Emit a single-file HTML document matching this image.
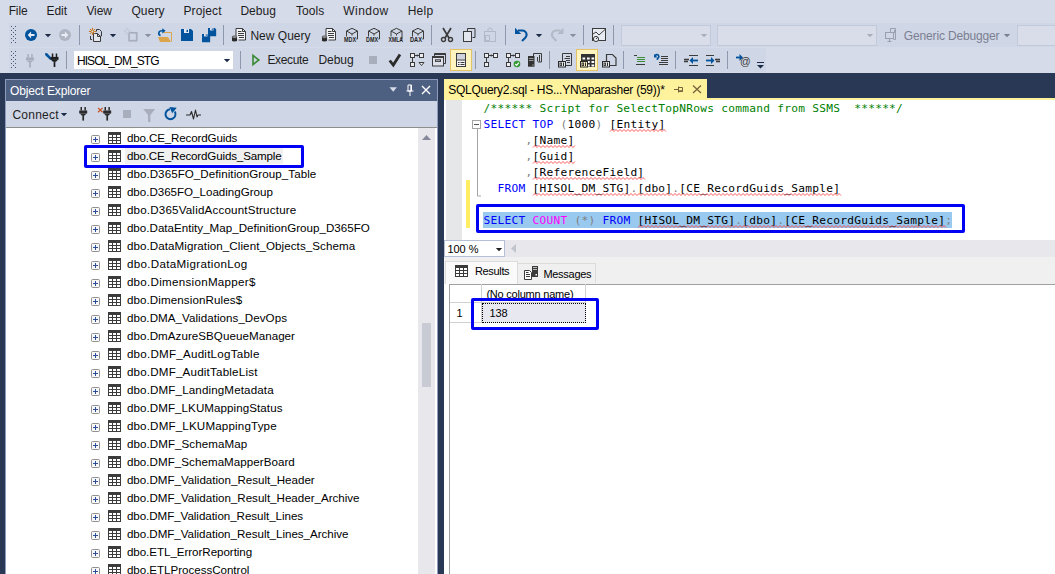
<!DOCTYPE html>
<html><head><meta charset="utf-8"><title>SSMS</title><style>
*{box-sizing:border-box;margin:0;padding:0}
html,body{width:1055px;height:574px;overflow:hidden;background:#293955}
body{position:relative;font-family:"Liberation Sans",sans-serif;font-size:11.6px;color:#1e1e1e}
.abs{position:absolute}
.t{position:absolute;white-space:pre;line-height:16px;height:16px}
#top{position:absolute;left:0;top:0;width:1055px;height:73px;background:#d6dbe9}
.tb{position:absolute;background:#cfd6e5}
.sep{position:absolute;width:1px;height:20px;background:#8e98ad}
svg{position:absolute;overflow:visible}
.hl{position:absolute;width:22px;height:22px;background:#fdf4bf;border:1px solid #e5c365}
.combo{position:absolute;height:21px;background:#d9ddea;border:1px solid #c2c9d9}
#oe{position:absolute;left:5px;top:79px;width:433px;height:500px;background:#fff;border:1px solid #8e9bbc}
#oeh{position:absolute;left:0;top:0;width:431px;height:21px;background:#4d6082;color:#fff}
#oet{position:absolute;left:0;top:21px;width:431px;height:26px;background:#cfd6e5}
.row{position:absolute;left:0;height:18px;width:412px}
.cl{position:absolute;left:483.5px;height:16px;line-height:16px;white-space:pre;font-family:"DejaVu Sans Mono","Liberation Mono",monospace;font-size:11.2px;letter-spacing:0.258px;color:#000}
.k{color:#0000ff}.g{color:#808080}.c{color:#008000}.m{color:#ff00ff}
.grid{font-family:"Liberation Sans",sans-serif;font-size:11px;color:#000}
</style></head><body>
<div id="top">
<div class="tb" style="left:9px;top:23px;width:1046px;height:24px"></div>
<div class="tb" style="left:9px;top:48px;width:757px;height:24px"></div>
<span class="t" style="left:8.70px;top:3px;font-size:12px;letter-spacing:-0.148px;line-height:16px;height:16px;">File</span>
<span class="t" style="left:46.40px;top:3px;font-size:12px;letter-spacing:0.004px;line-height:16px;height:16px;">Edit</span>
<span class="t" style="left:86.40px;top:3px;font-size:12px;letter-spacing:-0.066px;line-height:16px;height:16px;">View</span>
<span class="t" style="left:131.40px;top:3px;font-size:12px;letter-spacing:0.128px;line-height:16px;height:16px;">Query</span>
<span class="t" style="left:183.40px;top:3px;font-size:12px;letter-spacing:0.140px;line-height:16px;height:16px;">Project</span>
<span class="t" style="left:240.40px;top:3px;font-size:12px;letter-spacing:0.031px;line-height:16px;height:16px;">Debug</span>
<span class="t" style="left:296.00px;top:3px;font-size:12px;letter-spacing:0.071px;line-height:16px;height:16px;">Tools</span>
<span class="t" style="left:343.20px;top:3px;font-size:12px;letter-spacing:0.482px;line-height:16px;height:16px;">Window</span>
<span class="t" style="left:407.70px;top:3px;font-size:12px;letter-spacing:0.271px;line-height:16px;height:16px;">Help</span>
<svg style="left:11px;top:26px" width="5" height="18" viewBox="0 0 5 18"><g fill="#4a5574"><rect x="0" y="0" width="1" height="1"/><rect x="4" y="0" width="1" height="1"/><rect x="2" y="2" width="1" height="1"/><rect x="0" y="4" width="1" height="1"/><rect x="4" y="4" width="1" height="1"/><rect x="2" y="6" width="1" height="1"/><rect x="0" y="8" width="1" height="1"/><rect x="4" y="8" width="1" height="1"/><rect x="2" y="10" width="1" height="1"/><rect x="0" y="12" width="1" height="1"/><rect x="4" y="12" width="1" height="1"/><rect x="2" y="14" width="1" height="1"/><rect x="0" y="16" width="1" height="1"/><rect x="4" y="16" width="1" height="1"/></g></svg>
<svg style="left:25px;top:29px" width="12" height="12" viewBox="0 0 12 12"><circle cx="6" cy="6" r="6" fill="#00539c"/><path d="M2.700 6L6.100 2.600v2.300H9.500v2.200H6.100v2.300z" fill="#e8ecf5"/></svg>
<svg style="left:44px;top:34px" width="8" height="4" viewBox="0 0 8 4"><g transform="translate(0.5,0)"><path d="M0.300 0h6.400L3.500 3.300z" fill="#1b2a47"/></g></svg>
<svg style="left:59px;top:29px" width="12" height="12" viewBox="0 0 12 12"><circle cx="6" cy="6" r="6" fill="#b0b5c4"/><g transform="translate(12,0) scale(-1,1)"><path d="M2.700 6L6.100 2.600v2.300H9.500v2.200H6.100v2.300z" fill="#e8ecf5"/></g></svg>
<div class="sep" style="left:79px;top:25px;height:20px"></div>
<svg style="left:88px;top:27px" width="16" height="16" viewBox="0 0 16 16"><path d="M8.500 4.500V2.500h3l2 2v4.500h-1" fill="none" stroke="#3b3b3b"/><path d="M5.500 6.500h4l3 3v5h-7z" fill="#e4e6ee" stroke="#3b3b3b"/><path d="M9.500 6.500v3h3" fill="none" stroke="#3b3b3b"/><path d="M2.500 9v3.500h1.500" fill="none" stroke="#3b3b3b"/><g stroke="#c8700a" stroke-width="1" fill="none"><path d="M4.4 0.9000000000000004v7M0.9000000000000004 4.4h7M1.9000000000000004 1.9000000000000004l5 5M6.9 1.9000000000000004l-5 5"/></g><circle cx="4.4" cy="4.4" r="1" fill="#d6dbe9"/></svg>
<svg style="left:109px;top:34px" width="8" height="4" viewBox="0 0 8 4"><g transform="translate(0.5,0)"><path d="M0.300 0h6.400L3.500 3.300z" fill="#1b2a47"/></g></svg>
<svg style="left:123px;top:27px" width="16" height="16" viewBox="0 0 16 16"><rect x="6.100" y="5.800" width="7.600" height="7.900" fill="none" stroke="#a9aebd" stroke-width="1.700"/><g stroke="#c3c7d4" stroke-width="1" fill="none"><path d="M4.4 0.9000000000000004v7M0.9000000000000004 4.4h7M1.9000000000000004 1.9000000000000004l5 5M6.9 1.9000000000000004l-5 5"/></g><circle cx="4.4" cy="4.4" r="1" fill="#d6dbe9"/></svg>
<svg style="left:144px;top:34px" width="8" height="4" viewBox="0 0 8 4"><g transform="translate(0.5,0)"><path d="M0.300 0h6.400L3.500 3.300z" fill="#8a8f9d"/></g></svg>
<svg style="left:157px;top:27px" width="16" height="16" viewBox="0 0 16 16"><path d="M6 5.5h8.5v9" fill="none" stroke="#dca54c" stroke-width="1"/><path d="M1 10h10l3 5H3z" fill="#dca54c"/><path d="M3.5 8.5C1 7.5 1 3.8 5 3.8h1" fill="none" stroke="#00539c" stroke-width="1.6"/><path d="M5.3 1.2L8.6 3.8L5.3 6.4z" fill="#00539c"/></svg>
<svg style="left:181px;top:29px" width="12" height="12" viewBox="0 0 12 12"><g transform="scale(1.0)"><path d="M0 0h10l2 2v10H0z" fill="#00539c"/><rect x="3" y="0" width="5" height="4" fill="#e4e8f2"/><rect x="5.5" y="0.8" width="1.5" height="2.2" fill="#00539c"/></g></svg>
<svg style="left:202px;top:28px" width="14" height="14" viewBox="0 0 14 14"><g transform="translate(6,0) scale(0.68)"><path d="M0 0h10l2 2v10H0z" fill="#00539c"/><rect x="3" y="0" width="5" height="3.6" fill="#e4e8f2"/><rect x="5.5" y="0.6" width="1.5" height="2.2" fill="#00539c"/></g><g transform="translate(0,6) scale(0.68)"><path d="M0 0h10l2 2v10H0z" fill="#00539c" stroke="#d6dbe9" stroke-width="0"/><rect x="3" y="0" width="5" height="3.6" fill="#e4e8f2"/><rect x="5.5" y="0.6" width="1.5" height="2.2" fill="#00539c"/></g></svg>
<div class="sep" style="left:223px;top:25px;height:20px"></div>
<svg style="left:231px;top:28px" width="16" height="14" viewBox="0 0 16 14"><path d="M5 8V0.500h6.500l3 3v8.500h-7" fill="#f4f5f9" stroke="#3b3b3b"/><path d="M11.500 0.500v3h3" fill="none" stroke="#3b3b3b"/><path d="M7 3.500h3.500M7 5.500h6M7 7.500h6M8 9.500h5" stroke="#3b3b3b" fill="none"/><path d="M1 9v3.300a2.500 1.200 0 0 0 5 0V9z" fill="#2b2b2b"/><ellipse cx="3.500" cy="9" rx="2.500" ry="1.200" fill="#9a9a9a" stroke="#2b2b2b" stroke-width="0.500"/></svg>
<span class="t" style="left:250.40px;top:28px;font-size:12px;letter-spacing:0.021px;line-height:16px;height:16px;">New Query</span>
<svg style="left:321px;top:28px" width="16" height="14" viewBox="0 0 16 14"><path d="M5 8V0.500h6.500l3 3v8.500h-7" fill="#f4f5f9" stroke="#3b3b3b"/><path d="M11.500 0.500v3h3" fill="none" stroke="#3b3b3b"/><path d="M7 3.500h3.500M7 5.500h6M7 7.500h6M8 9.500h5" stroke="#3b3b3b" fill="none"/><path d="M1 9v3.300a2.500 1.200 0 0 0 5 0V9z" fill="#2b2b2b"/><ellipse cx="3.500" cy="9" rx="2.500" ry="1.200" fill="#9a9a9a" stroke="#2b2b2b" stroke-width="0.500"/></svg>
<svg style="left:343px;top:27px" width="16" height="16" viewBox="0 0 16 16"><path d="M3.500 9.500V4L9 1.300L14.500 4V12h-1.200" fill="none" stroke="#3b3b3b" stroke-width="1"/><path d="M3.500 4L9 7L14.500 4M9 7V8.500" fill="none" stroke="#3b3b3b" stroke-width="1"/><text x="1" y="14.600" font-family="Liberation Sans,sans-serif" font-weight="bold" font-size="7" fill="#1e1e1e" textLength="12" lengthAdjust="spacingAndGlyphs">MDX</text></svg>
<svg style="left:365px;top:27px" width="16" height="16" viewBox="0 0 16 16"><path d="M3.500 9.500V4L9 1.300L14.500 4V12h-1.200" fill="none" stroke="#3b3b3b" stroke-width="1"/><path d="M3.500 4L9 7L14.500 4M9 7V8.500" fill="none" stroke="#3b3b3b" stroke-width="1"/><text x="1" y="14.600" font-family="Liberation Sans,sans-serif" font-weight="bold" font-size="7" fill="#1e1e1e" textLength="12" lengthAdjust="spacingAndGlyphs">DMX</text></svg>
<svg style="left:387px;top:27px" width="17" height="16" viewBox="0 0 17 16"><g transform="translate(0.5,0)"><path d="M3.500 9.500V4L9 1.300L14.500 4V12h-1.200" fill="none" stroke="#3b3b3b" stroke-width="1"/><path d="M3.500 4L9 7L14.500 4M9 7V8.500" fill="none" stroke="#3b3b3b" stroke-width="1"/><text x="1" y="14.600" font-family="Liberation Sans,sans-serif" font-weight="bold" font-size="7" fill="#1e1e1e" textLength="14.5" lengthAdjust="spacingAndGlyphs">XMLA</text></g></svg>
<svg style="left:409px;top:27px" width="16" height="16" viewBox="0 0 16 16"><path d="M3.500 9.500V4L9 1.300L14.500 4V12h-1.200" fill="none" stroke="#3b3b3b" stroke-width="1"/><path d="M3.500 4L9 7L14.500 4M9 7V8.500" fill="none" stroke="#3b3b3b" stroke-width="1"/><text x="1" y="14.600" font-family="Liberation Sans,sans-serif" font-weight="bold" font-size="7" fill="#1e1e1e" textLength="12" lengthAdjust="spacingAndGlyphs">DAX</text></svg>
<div class="sep" style="left:431px;top:25px;height:20px"></div>
<svg style="left:440px;top:28px" width="14" height="14" viewBox="0 0 14 14"><g transform="translate(0.5,0)"><path d="M2.500 0L8.500 10M10.500 0L4.500 10" stroke="#3b3b3b" stroke-width="1.700" fill="none"/><circle cx="3" cy="11.500" r="2" fill="none" stroke="#3b3b3b" stroke-width="1.400"/><circle cx="10" cy="11.500" r="2" fill="none" stroke="#3b3b3b" stroke-width="1.400"/></g></svg>
<svg style="left:463px;top:28px" width="13" height="14" viewBox="0 0 13 14"><path d="M4.5 3V0.500h7.500v9h-2.500" fill="none" stroke="#3b3b3b"/><rect x="0.500" y="3.500" width="8" height="10" fill="#e4e6ee" stroke="#3b3b3b"/></svg>
<svg style="left:484px;top:28px" width="13" height="14" viewBox="0 0 13 14"><path d="M4 3V1.500a2 1.500 0 0 1 4 0V3" fill="none" stroke="#b4b9c8"/><rect x="0.500" y="3.500" width="11" height="10" fill="none" stroke="#b4b9c8"/><rect x="1.500" y="7.500" width="4" height="5" fill="none" stroke="#b4b9c8"/></svg>
<div class="sep" style="left:505px;top:25px;height:20px"></div>
<svg style="left:514px;top:27px" width="15" height="15" viewBox="0 0 15 15"><g transform="translate(0.5,0)"><path d="M3.5 3.500h4.500a4.200 4.200 0 0 1 2.800 7.200L7.500 14" fill="none" stroke="#00539c" stroke-width="2"/><path d="M0.500 0.800v6.200h6.200z" fill="#00539c"/></g></svg>
<svg style="left:535px;top:34px" width="8" height="4" viewBox="0 0 8 4"><g transform="translate(0.5,0)"><path d="M0.300 0h6.400L3.500 3.300z" fill="#1b2a47"/></g></svg>
<svg style="left:550px;top:27px" width="14" height="15" viewBox="0 0 14 15"><g transform="translate(14,0) scale(-1,1)"><path d="M3.5 3.500h4.500a4.200 4.200 0 0 1 2.800 7.200L7.500 14" fill="none" stroke="#b4b9c8" stroke-width="2"/><path d="M0.500 0.800v6.200h6.200z" fill="#b4b9c8"/></g></svg>
<svg style="left:569px;top:34px" width="8" height="4" viewBox="0 0 8 4"><g transform="translate(0.5,0)"><path d="M0.300 0h6.400L3.500 3.300z" fill="#8a8f9d"/></g></svg>
<div class="sep" style="left:583px;top:25px;height:20px"></div>
<svg style="left:592px;top:28px" width="14" height="14" viewBox="0 0 14 14"><rect x="0.500" y="0.500" width="13" height="12" fill="#e9ebf2" stroke="#3b3b3b"/><path d="M1 6L4 4L7 7L13 1.500" fill="none" stroke="#3b3b3b"/><circle cx="4" cy="11" r="2.600" fill="#e9ebf2" stroke="#3b3b3b"/><path d="M4 11L5.500 9.500" stroke="#3b3b3b"/></svg>
<div class="sep" style="left:613px;top:25px;height:20px"></div>
<div class="combo" style="left:621px;top:25px;width:90px"></div>
<svg style="left:700px;top:34px" width="8" height="4" viewBox="0 0 8 4"><g transform="translate(0.5,0)"><path d="M0.300 0h6.400L3.500 3.300z" fill="#a9aebd"/></g></svg>
<div class="combo" style="left:717px;top:25px;width:160px"></div>
<svg style="left:866px;top:34px" width="8" height="4" viewBox="0 0 8 4"><g transform="translate(0.5,0)"><path d="M0.300 0h6.400L3.500 3.300z" fill="#a9aebd"/></g></svg>
<svg style="left:885px;top:28px" width="14" height="14" viewBox="0 0 14 14"><rect x="0.500" y="4.500" width="8" height="6" fill="none" stroke="#9a9fae"/><path d="M2.500 13.500h4M4.500 10.500v3" stroke="#9a9fae" fill="none"/><path d="M5.500 4V0.500h5v11h-2" fill="none" stroke="#9a9fae"/><path d="M9.500 2v3" stroke="#9a9fae"/></svg>
<span class="t" style="left:903.80px;top:28px;font-size:12px;letter-spacing:-0.151px;line-height:16px;height:16px;color:#7b7f92;">Generic Debugger</span>
<svg style="left:1003px;top:34px" width="8" height="4" viewBox="0 0 8 4"><g transform="translate(0.5,0)"><path d="M0.300 0h6.400L3.500 3.300z" fill="#7b7f92"/></g></svg>
<div class="combo" style="left:1017px;top:25px;width:60px"></div>
<svg style="left:11px;top:51px" width="5" height="18" viewBox="0 0 5 18"><g fill="#4a5574"><rect x="0" y="0" width="1" height="1"/><rect x="4" y="0" width="1" height="1"/><rect x="2" y="2" width="1" height="1"/><rect x="0" y="4" width="1" height="1"/><rect x="4" y="4" width="1" height="1"/><rect x="2" y="6" width="1" height="1"/><rect x="0" y="8" width="1" height="1"/><rect x="4" y="8" width="1" height="1"/><rect x="2" y="10" width="1" height="1"/><rect x="0" y="12" width="1" height="1"/><rect x="4" y="12" width="1" height="1"/><rect x="2" y="14" width="1" height="1"/><rect x="0" y="16" width="1" height="1"/><rect x="4" y="16" width="1" height="1"/></g></svg>
<svg style="left:26px;top:54px" width="9" height="14" viewBox="0 0 9 14"><path d="M1.300 0h1.500v3.500H1.300zM5.200 0h1.500v3.500H5.200z" fill="#a9aebd"/><path d="M0 3.400h8v3H0z" fill="#a9aebd"/><path d="M0.800 6.400h6.400L5.600 8.300H2.400z" fill="#a9aebd"/><rect x="3.150" y="8" width="1.700" height="5.500" fill="#a9aebd"/></svg>
<svg style="left:45px;top:53px" width="14" height="14" viewBox="0 0 14 14"><path d="M1 1l4.800 4.800" stroke="#00539c" stroke-width="2.600"/><path d="M0 0l2.200 0.400l-1.800 1.800z" fill="#00539c"/><path d="M5 6.800l1.800-1.800l0.800 2.600z" fill="#00539c"/><g transform="translate(5.500,0.500)"><path d="M1.300 0h1.500v3.500H1.300zM5.200 0h1.500v3.500H5.200z" fill="#1e1e1e"/><path d="M0 3.400h8v3H0z" fill="#1e1e1e"/><path d="M0.800 6.400h6.400L5.600 8.300H2.400z" fill="#1e1e1e"/><rect x="3.150" y="8" width="1.700" height="5.500" fill="#1e1e1e"/></g></svg>
<div class="sep" style="left:66px;top:51px;height:18px"></div>
<div class="abs" style="left:74px;top:51px;width:159px;height:18px;background:#fff"></div>
<span class="t" style="left:76.90px;top:53px;font-size:12px;letter-spacing:-0.909px;line-height:16px;height:16px;color:#000;">HISOL_DM_STG</span>
<svg style="left:223px;top:59px" width="8" height="4" viewBox="0 0 8 4"><g transform="translate(0.5,0)"><path d="M0.300 0h6.400L3.500 3.300z" fill="#1b2a47"/></g></svg>
<div class="sep" style="left:240px;top:51px;height:18px"></div>
<svg style="left:252px;top:54px" width="8" height="12" viewBox="0 0 8 12"><g transform="translate(0,0.5)"><path d="M1 1L6.800 5.500L1 10z" fill="none" stroke="#388a34" stroke-width="1.600" stroke-linejoin="miter"/></g></svg>
<span class="t" style="left:267.40px;top:52px;font-size:12px;letter-spacing:-0.360px;line-height:16px;height:16px;">Execute</span>
<span class="t" style="left:318.40px;top:52px;font-size:12px;letter-spacing:-0.044px;line-height:16px;height:16px;">Debug</span>
<svg style="left:369px;top:56px" width="8" height="8" viewBox="0 0 8 8"><rect width="8" height="8" fill="#a9aebd"/></svg>
<svg style="left:388px;top:53px" width="14" height="14" viewBox="0 0 14 14"><g transform="translate(0.5,0.5)"><path d="M1.200 7L4.800 11.500L11.500 1" fill="none" stroke="#2b2b2b" stroke-width="2.800"/></g></svg>
<svg style="left:410px;top:53px" width="14" height="14" viewBox="0 0 14 14"><rect x="0.500" y="0.500" width="4" height="4" fill="#eceef4" stroke="#3b3b3b"/><rect x="9.500" y="0.500" width="4" height="4" fill="#eceef4" stroke="#3b3b3b"/><rect x="0.500" y="9.500" width="4" height="4" fill="#eceef4" stroke="#3b3b3b"/><path d="M5 2.500h4.500" stroke="#3b3b3b"/><path d="M6 2.500l1.500-1.500v3z" fill="#3b3b3b"/><path d="M2.500 5v4.500" stroke="#3b3b3b"/><path d="M9 9.500h5l-2.500 3z" fill="#f4f5f9" stroke="#3b3b3b" stroke-linejoin="round"/></svg>
<svg style="left:432px;top:53px" width="14" height="14" viewBox="0 0 14 14"><path d="M2.500 3V0.500h11v10h-2" fill="none" stroke="#3b3b3b" stroke-width="1"/><path d="M2.500 1h11" stroke="#3b3b3b" stroke-width="2"/><rect x="0.500" y="3.500" width="11" height="9.500" fill="#dde1ec" stroke="#3b3b3b" stroke-width="1"/><path d="M0.500 4h11" stroke="#3b3b3b" stroke-width="2"/><rect x="3.500" y="6.800" width="5" height="1.600" fill="none" stroke="#3b3b3b" stroke-width="1"/></svg>
<div class="hl" style="left:450px;top:49px"></div>
<svg style="left:456px;top:53px" width="10" height="14" viewBox="0 0 10 14"><rect x="0.500" y="0.500" width="9" height="13" fill="#f4f5f9" stroke="#3b3b3b"/><rect x="1" y="1" width="8" height="5.500" fill="#d0d3de"/><path d="M0.500 7h9" stroke="#3b3b3b"/><path d="M2 9.500h1.500M4.500 9.500h4M2 11.500h1.500M4.500 11.500h4" stroke="#3b3b3b"/></svg>
<div class="sep" style="left:475px;top:51px;height:18px"></div>
<svg style="left:484px;top:53px" width="14" height="14" viewBox="0 0 14 14"><rect x="0.500" y="0.500" width="4" height="4" fill="#eceef4" stroke="#3b3b3b"/><rect x="9.500" y="0.500" width="4" height="4" fill="#eceef4" stroke="#3b3b3b"/><rect x="0.500" y="9.500" width="4" height="4" fill="#eceef4" stroke="#3b3b3b"/><path d="M5 2.500h4.500" stroke="#3b3b3b"/><path d="M6 2.500l1.500-1.500v3z" fill="#3b3b3b"/><path d="M2.500 5v4.500" stroke="#3b3b3b"/></svg>
<svg style="left:506px;top:53px" width="14" height="14" viewBox="0 0 14 14"><rect x="0.500" y="0.500" width="4" height="4" fill="#eceef4" stroke="#3b3b3b"/><rect x="9.500" y="0.500" width="4" height="4" fill="#eceef4" stroke="#3b3b3b"/><rect x="0.500" y="9.500" width="4" height="4" fill="#eceef4" stroke="#3b3b3b"/><path d="M5 2.500h4.500" stroke="#3b3b3b"/><path d="M6 2.500l1.500-1.500v3z" fill="#3b3b3b"/><path d="M2.500 5v4.500" stroke="#3b3b3b"/><circle cx="11" cy="11" r="3.300" fill="#339933"/><path d="M9.300 11l1.300 1.400l2.200-2.800" fill="none" stroke="#fff" stroke-width="1.200"/></svg>
<svg style="left:528px;top:53px" width="14" height="14" viewBox="0 0 14 14"><path d="M5.500 3.500V0.500h8v8.500H10" fill="none" stroke="#3b3b3b"/><path d="M9.500 4v4.500M11.500 2v6.500" stroke="#3b3b3b"/><rect x="0" y="3" width="6.500" height="10.700" fill="#333"/><path d="M1 5.500h4.500M1 7.500h4.500" stroke="#9a9a9a"/><rect x="4.500" y="11.500" width="1" height="1" fill="#ddd"/></svg>
<div class="sep" style="left:549px;top:51px;height:18px"></div>
<svg style="left:558px;top:53px" width="14" height="14" viewBox="0 0 14 14"><path d="M4.500 8V0.500h9v12H8" fill="none" stroke="#3b3b3b"/><path d="M8 3.500h4M6.500 5.500h5.500M8 7.500h4M9 9.500h3" stroke="#3b3b3b" stroke-width="1"/><rect x="0.5" y="8.5" width="7" height="5.500" fill="#eceef5" stroke="#2b2b2b"/><rect x="2" y="10" width="1.600" height="2.500" fill="none" stroke="#2b2b2b" stroke-width="0.900"/><path d="M5.5 9.5v3.500" stroke="#2b2b2b" stroke-width="1"/></svg>
<div class="hl" style="left:576px;top:49px"></div>
<svg style="left:580px;top:53px" width="15" height="14" viewBox="0 0 15 14"><rect x="1" y="1" width="14" height="13" fill="#333"/><rect x="2.5" y="4.5" width="2.700" height="2" fill="#fff"/><rect x="7" y="4.5" width="2.700" height="2" fill="#fff"/><rect x="11.5" y="4.5" width="2.700" height="2" fill="#fff"/><rect x="2.5" y="8" width="2.700" height="2" fill="#fff"/><rect x="7" y="8" width="2.700" height="2" fill="#fff"/><rect x="11.5" y="8" width="2.700" height="2" fill="#fff"/><rect x="2.5" y="11.5" width="2.700" height="2" fill="#fff"/><rect x="7" y="11.5" width="2.700" height="2" fill="#fff"/><rect x="11.5" y="11.5" width="2.700" height="2" fill="#fff"/><rect x="0.5" y="8.5" width="7" height="5.500" fill="#fdf4bf" stroke="#2b2b2b"/><rect x="2" y="10" width="1.600" height="2.500" fill="none" stroke="#2b2b2b" stroke-width="0.900"/><path d="M5.5 9.5v3.500" stroke="#2b2b2b" stroke-width="1"/></svg>
<svg style="left:602px;top:53px" width="14" height="14" viewBox="0 0 14 14"><path d="M4.500 8V1.500h6l3.500 3.500v7.500H8" fill="none" stroke="#3b3b3b" stroke-width="1.200"/><rect x="0.5" y="8.5" width="7" height="5.500" fill="#eceef5" stroke="#2b2b2b"/><rect x="2" y="10" width="1.600" height="2.500" fill="none" stroke="#2b2b2b" stroke-width="0.900"/><path d="M5.5 9.5v3.500" stroke="#2b2b2b" stroke-width="1"/></svg>
<div class="sep" style="left:623px;top:51px;height:18px"></div>
<svg style="left:634px;top:55px" width="11" height="11" viewBox="0 0 11 11"><path d="M0 0.500h3" stroke="#3b3b3b"/><path d="M3 2.500h8M3 4.500h8M3 6.500h8" stroke="#3c8c3c"/><path d="M2 9.500h9" stroke="#3b3b3b"/></svg>
<svg style="left:654px;top:54px" width="14" height="12" viewBox="0 0 14 12"><path d="M1 2.200C1.500 0 5 0.200 4.800 2.600C4.700 4 3.500 4.300 3 5.800" fill="none" stroke="#00539c" stroke-width="1.700"/><path d="M0 0v3.500h3.500z" fill="#00539c"/><path d="M7 2.500h7M7 4.500h7M7 6.500h7M5 8.500h9M5 10.500h9" stroke="#3b3b3b"/></svg>
<div class="sep" style="left:675px;top:51px;height:18px"></div>
<svg style="left:684px;top:55px" width="14" height="11" viewBox="0 0 14 11"><path d="M5 0.500h9M5 10.500h9" stroke="#3b3b3b"/><path d="M0 4.500h5M0 6.500h4" stroke="#3b3b3b" stroke-width="1.300"/><path d="M7 5.500h7" stroke="#00539c" stroke-width="1.800"/><path d="M5.500 5.500L9 2v7z" fill="#00539c"/></svg>
<svg style="left:706px;top:55px" width="14" height="11" viewBox="0 0 14 11"><path d="M0 0.500h8M0 10.500h8" stroke="#3b3b3b"/><path d="M9 4.500h5M10 6.500h4" stroke="#3b3b3b" stroke-width="1.300"/><path d="M0 5.500h6" stroke="#00539c" stroke-width="1.800"/><path d="M8.500 5.500L5 2v7z" fill="#00539c"/></svg>
<div class="sep" style="left:727px;top:51px;height:18px"></div>
<svg style="left:736px;top:54px" width="15" height="14" viewBox="0 0 15 14"><path d="M0 3.500h5" stroke="#00539c" stroke-width="1.800"/><path d="M7 3.500L3.500 0v7z" fill="#00539c"/><text x="4" y="11" font-family="Liberation Sans,sans-serif" font-size="10.500" fill="#3b3b3b">@</text></svg>
<svg style="left:757px;top:62px" width="7" height="7" viewBox="0 0 7 7"><path d="M0 0.500h7" stroke="#1b2a47"/><path d="M0 3h7L3.500 6.500z" fill="#1b2a47"/></svg>
</div>
<div id="oe">
<div id="oeh">
<span class="t" style="left:4.00px;top:3px;font-size:12px;letter-spacing:-0.150px;line-height:16px;height:16px;color:#fff;">Object Explorer</span>
<svg style="left:383px;top:7px" width="9" height="6" viewBox="0 0 9 6"><g transform="translate(0.5,0.3)"><path d="M0 0h7.400L3.700 4.500z" fill="#d6dbe9"/></g></svg>
<svg style="left:399px;top:4px" width="10" height="14" viewBox="0 0 10 14"><g transform="translate(0.5,0.5)"><path d="M2.500 0.500h3.500v6h-3.500zM1 6.500h7M4.500 6.500v5" fill="none" stroke="#fff" stroke-width="1"/><path d="M5.500 0.500v6" stroke="#fff" stroke-width="1.300"/></g></svg>
<svg style="left:415px;top:5px" width="10" height="10" viewBox="0 0 10 10"><g transform="translate(0.5,0.5)"><path d="M0.500 0.500L8.5 8.5M8.5 0.500L0.500 8.5" stroke="#fff" stroke-width="1.4"/></g></svg>
</div>
<div id="oet">
<span class="t" style="left:6.40px;top:6px;font-size:12px;letter-spacing:0.249px;line-height:16px;height:16px;">Connect</span>
<svg style="left:54px;top:12px" width="8" height="4" viewBox="0 0 8 4"><g transform="translate(0.5,0)"><path d="M0.300 0h6.400L3.500 3.300z" fill="#1b2a47"/></g></svg>
<svg style="left:73px;top:6px" width="10" height="15" viewBox="0 0 10 15"><g transform="translate(0.2,0.1)"><path d="M1.300 0h1.500v3.500H1.300zM5.200 0h1.500v3.500H5.200z" fill="#2b2b2b"/><path d="M0 3.400h8v3H0z" fill="#2b2b2b"/><path d="M0.800 6.400h6.400L5.600 8.300H2.400z" fill="#2b2b2b"/><rect x="3.150" y="8" width="1.700" height="5.500" fill="#2b2b2b"/></g></svg>
<svg style="left:91px;top:6px" width="15" height="15" viewBox="0 0 15 15"><g transform="translate(0.7,0.1)"><path d="M0.300 0.800l4.600 4.400M4.900 0.800l-4.600 4.400" stroke="#c8501e" stroke-width="1.200"/><g transform="translate(5.500,0)"><path d="M1.300 0h1.500v3.500H1.300zM5.200 0h1.500v3.500H5.200z" fill="#2b2b2b"/><path d="M0 3.400h8v3H0z" fill="#2b2b2b"/><path d="M0.800 6.400h6.400L5.600 8.300H2.400z" fill="#2b2b2b"/><rect x="3.150" y="8" width="1.700" height="5.500" fill="#2b2b2b"/></g></g></svg>
<svg style="left:117px;top:9px" width="8" height="8" viewBox="0 0 8 8"><rect width="8" height="8" fill="#a9aebd"/></svg>
<svg style="left:137px;top:8px" width="13" height="13" viewBox="0 0 13 13"><g transform="translate(0.2,0)"><path d="M0 0h12L7.200 6v7H4.800V6z" fill="#a9aebd"/></g></svg>
<svg style="left:159px;top:6px" width="13" height="14" viewBox="0 0 13 14"><path d="M9.800 4.600A5 5 0 1 1 5 2.200" fill="none" stroke="#00539c" stroke-width="2"/><path d="M4.500 0L11.800 0.800L7.200 6.200z" fill="#00539c"/></svg>
<svg style="left:180px;top:8px" width="15" height="11" viewBox="0 0 15 11"><path d="M0 6h4l1.500-3.500L7.500 10L9.500 1l1.500 7l1-2h3" fill="none" stroke="#2b2b2b" stroke-width="1.100" stroke-linejoin="round"/></svg>
</div>
<div class="abs" style="left:0;top:47px;width:431px;height:1px;background:#8e8e8e"></div>
<div class="abs" id="tree" style="left:1px;top:48px;width:412px;height:460px;overflow:hidden">
<div class="row" style="top:1px">
<svg style="left:84px;top:6px" width="9" height="9" viewBox="0 0 9 9"><rect x="0.5" y="0.5" width="8" height="8" rx="1" fill="#f7f7f7" stroke="#919191"/><path d="M2 4.5h5M4.500 2v5" stroke="#2b4d9c" stroke-width="1"/></svg>
<svg style="left:101px;top:3px" width="13" height="12" viewBox="0 0 13 12"><rect width="13" height="12" fill="#3b3b3b"/><g fill="#fff"><rect x="1" y="3" width="3" height="2"/><rect x="5" y="3" width="3" height="2"/><rect x="9" y="3" width="3" height="2"/><rect x="1" y="6" width="3" height="2"/><rect x="5" y="6" width="3" height="2"/><rect x="9" y="6" width="3" height="2"/><rect x="1" y="9" width="3" height="2"/><rect x="5" y="9" width="3" height="2"/><rect x="9" y="9" width="3" height="2"/></g></svg>
<span class="t" style="left:119.90px;top:1px;font-size:11.6px;letter-spacing:-0.140px;line-height:16px;height:16px;color:#000;">dbo.CE_RecordGuids</span>
</div>
<div class="row" style="top:19px">
<svg style="left:84px;top:6px" width="9" height="9" viewBox="0 0 9 9"><rect x="0.5" y="0.5" width="8" height="8" rx="1" fill="#f7f7f7" stroke="#919191"/><path d="M2 4.5h5M4.500 2v5" stroke="#2b4d9c" stroke-width="1"/></svg>
<svg style="left:101px;top:3px" width="13" height="12" viewBox="0 0 13 12"><rect width="13" height="12" fill="#3b3b3b"/><g fill="#fff"><rect x="1" y="3" width="3" height="2"/><rect x="5" y="3" width="3" height="2"/><rect x="9" y="3" width="3" height="2"/><rect x="1" y="6" width="3" height="2"/><rect x="5" y="6" width="3" height="2"/><rect x="9" y="6" width="3" height="2"/><rect x="1" y="9" width="3" height="2"/><rect x="5" y="9" width="3" height="2"/><rect x="9" y="9" width="3" height="2"/></g></svg>
<div class="abs" style="left:118px;top:1px;width:158px;height:16px;background:#f0f0f0"></div>
<span class="t" style="left:119.90px;top:1px;font-size:11.6px;letter-spacing:-0.156px;line-height:16px;height:16px;color:#000;">dbo.CE_RecordGuids_Sample</span>
</div>
<div class="row" style="top:37px">
<svg style="left:84px;top:6px" width="9" height="9" viewBox="0 0 9 9"><rect x="0.5" y="0.5" width="8" height="8" rx="1" fill="#f7f7f7" stroke="#919191"/><path d="M2 4.5h5M4.500 2v5" stroke="#2b4d9c" stroke-width="1"/></svg>
<svg style="left:101px;top:3px" width="13" height="12" viewBox="0 0 13 12"><rect width="13" height="12" fill="#3b3b3b"/><g fill="#fff"><rect x="1" y="3" width="3" height="2"/><rect x="5" y="3" width="3" height="2"/><rect x="9" y="3" width="3" height="2"/><rect x="1" y="6" width="3" height="2"/><rect x="5" y="6" width="3" height="2"/><rect x="9" y="6" width="3" height="2"/><rect x="1" y="9" width="3" height="2"/><rect x="5" y="9" width="3" height="2"/><rect x="9" y="9" width="3" height="2"/></g></svg>
<span class="t" style="left:119.90px;top:1px;font-size:11.6px;letter-spacing:0.059px;line-height:16px;height:16px;color:#000;">dbo.D365FO_DefinitionGroup_Table</span>
</div>
<div class="row" style="top:55px">
<svg style="left:84px;top:6px" width="9" height="9" viewBox="0 0 9 9"><rect x="0.5" y="0.5" width="8" height="8" rx="1" fill="#f7f7f7" stroke="#919191"/><path d="M2 4.5h5M4.500 2v5" stroke="#2b4d9c" stroke-width="1"/></svg>
<svg style="left:101px;top:3px" width="13" height="12" viewBox="0 0 13 12"><rect width="13" height="12" fill="#3b3b3b"/><g fill="#fff"><rect x="1" y="3" width="3" height="2"/><rect x="5" y="3" width="3" height="2"/><rect x="9" y="3" width="3" height="2"/><rect x="1" y="6" width="3" height="2"/><rect x="5" y="6" width="3" height="2"/><rect x="9" y="6" width="3" height="2"/><rect x="1" y="9" width="3" height="2"/><rect x="5" y="9" width="3" height="2"/><rect x="9" y="9" width="3" height="2"/></g></svg>
<span class="t" style="left:119.90px;top:1px;font-size:11.6px;letter-spacing:-0.015px;line-height:16px;height:16px;color:#000;">dbo.D365FO_LoadingGroup</span>
</div>
<div class="row" style="top:73px">
<svg style="left:84px;top:6px" width="9" height="9" viewBox="0 0 9 9"><rect x="0.5" y="0.5" width="8" height="8" rx="1" fill="#f7f7f7" stroke="#919191"/><path d="M2 4.5h5M4.500 2v5" stroke="#2b4d9c" stroke-width="1"/></svg>
<svg style="left:101px;top:3px" width="13" height="12" viewBox="0 0 13 12"><rect width="13" height="12" fill="#3b3b3b"/><g fill="#fff"><rect x="1" y="3" width="3" height="2"/><rect x="5" y="3" width="3" height="2"/><rect x="9" y="3" width="3" height="2"/><rect x="1" y="6" width="3" height="2"/><rect x="5" y="6" width="3" height="2"/><rect x="9" y="6" width="3" height="2"/><rect x="1" y="9" width="3" height="2"/><rect x="5" y="9" width="3" height="2"/><rect x="9" y="9" width="3" height="2"/></g></svg>
<span class="t" style="left:119.90px;top:1px;font-size:11.6px;letter-spacing:0.188px;line-height:16px;height:16px;color:#000;">dbo.D365ValidAccountStructure</span>
</div>
<div class="row" style="top:91px">
<svg style="left:84px;top:6px" width="9" height="9" viewBox="0 0 9 9"><rect x="0.5" y="0.5" width="8" height="8" rx="1" fill="#f7f7f7" stroke="#919191"/><path d="M2 4.5h5M4.500 2v5" stroke="#2b4d9c" stroke-width="1"/></svg>
<svg style="left:101px;top:3px" width="13" height="12" viewBox="0 0 13 12"><rect width="13" height="12" fill="#3b3b3b"/><g fill="#fff"><rect x="1" y="3" width="3" height="2"/><rect x="5" y="3" width="3" height="2"/><rect x="9" y="3" width="3" height="2"/><rect x="1" y="6" width="3" height="2"/><rect x="5" y="6" width="3" height="2"/><rect x="9" y="6" width="3" height="2"/><rect x="1" y="9" width="3" height="2"/><rect x="5" y="9" width="3" height="2"/><rect x="9" y="9" width="3" height="2"/></g></svg>
<span class="t" style="left:119.90px;top:1px;font-size:11.6px;letter-spacing:0.014px;line-height:16px;height:16px;color:#000;">dbo.DataEntity_Map_DefinitionGroup_D365FO</span>
</div>
<div class="row" style="top:109px">
<svg style="left:84px;top:6px" width="9" height="9" viewBox="0 0 9 9"><rect x="0.5" y="0.5" width="8" height="8" rx="1" fill="#f7f7f7" stroke="#919191"/><path d="M2 4.5h5M4.500 2v5" stroke="#2b4d9c" stroke-width="1"/></svg>
<svg style="left:101px;top:3px" width="13" height="12" viewBox="0 0 13 12"><rect width="13" height="12" fill="#3b3b3b"/><g fill="#fff"><rect x="1" y="3" width="3" height="2"/><rect x="5" y="3" width="3" height="2"/><rect x="9" y="3" width="3" height="2"/><rect x="1" y="6" width="3" height="2"/><rect x="5" y="6" width="3" height="2"/><rect x="9" y="6" width="3" height="2"/><rect x="1" y="9" width="3" height="2"/><rect x="5" y="9" width="3" height="2"/><rect x="9" y="9" width="3" height="2"/></g></svg>
<span class="t" style="left:119.90px;top:1px;font-size:11.6px;letter-spacing:0.072px;line-height:16px;height:16px;color:#000;">dbo.DataMigration_Client_Objects_Schema</span>
</div>
<div class="row" style="top:127px">
<svg style="left:84px;top:6px" width="9" height="9" viewBox="0 0 9 9"><rect x="0.5" y="0.5" width="8" height="8" rx="1" fill="#f7f7f7" stroke="#919191"/><path d="M2 4.5h5M4.500 2v5" stroke="#2b4d9c" stroke-width="1"/></svg>
<svg style="left:101px;top:3px" width="13" height="12" viewBox="0 0 13 12"><rect width="13" height="12" fill="#3b3b3b"/><g fill="#fff"><rect x="1" y="3" width="3" height="2"/><rect x="5" y="3" width="3" height="2"/><rect x="9" y="3" width="3" height="2"/><rect x="1" y="6" width="3" height="2"/><rect x="5" y="6" width="3" height="2"/><rect x="9" y="6" width="3" height="2"/><rect x="1" y="9" width="3" height="2"/><rect x="5" y="9" width="3" height="2"/><rect x="9" y="9" width="3" height="2"/></g></svg>
<span class="t" style="left:119.90px;top:1px;font-size:11.6px;letter-spacing:0.332px;line-height:16px;height:16px;color:#000;">dbo.DataMigrationLog</span>
</div>
<div class="row" style="top:145px">
<svg style="left:84px;top:6px" width="9" height="9" viewBox="0 0 9 9"><rect x="0.5" y="0.5" width="8" height="8" rx="1" fill="#f7f7f7" stroke="#919191"/><path d="M2 4.5h5M4.500 2v5" stroke="#2b4d9c" stroke-width="1"/></svg>
<svg style="left:101px;top:3px" width="13" height="12" viewBox="0 0 13 12"><rect width="13" height="12" fill="#3b3b3b"/><g fill="#fff"><rect x="1" y="3" width="3" height="2"/><rect x="5" y="3" width="3" height="2"/><rect x="9" y="3" width="3" height="2"/><rect x="1" y="6" width="3" height="2"/><rect x="5" y="6" width="3" height="2"/><rect x="9" y="6" width="3" height="2"/><rect x="1" y="9" width="3" height="2"/><rect x="5" y="9" width="3" height="2"/><rect x="9" y="9" width="3" height="2"/></g></svg>
<span class="t" style="left:119.90px;top:1px;font-size:11.6px;letter-spacing:0.285px;line-height:16px;height:16px;color:#000;">dbo.DimensionMapper$</span>
</div>
<div class="row" style="top:163px">
<svg style="left:84px;top:6px" width="9" height="9" viewBox="0 0 9 9"><rect x="0.5" y="0.5" width="8" height="8" rx="1" fill="#f7f7f7" stroke="#919191"/><path d="M2 4.5h5M4.500 2v5" stroke="#2b4d9c" stroke-width="1"/></svg>
<svg style="left:101px;top:3px" width="13" height="12" viewBox="0 0 13 12"><rect width="13" height="12" fill="#3b3b3b"/><g fill="#fff"><rect x="1" y="3" width="3" height="2"/><rect x="5" y="3" width="3" height="2"/><rect x="9" y="3" width="3" height="2"/><rect x="1" y="6" width="3" height="2"/><rect x="5" y="6" width="3" height="2"/><rect x="9" y="6" width="3" height="2"/><rect x="1" y="9" width="3" height="2"/><rect x="5" y="9" width="3" height="2"/><rect x="9" y="9" width="3" height="2"/></g></svg>
<span class="t" style="left:119.90px;top:1px;font-size:11.6px;letter-spacing:0.098px;line-height:16px;height:16px;color:#000;">dbo.DimensionRules$</span>
</div>
<div class="row" style="top:181px">
<svg style="left:84px;top:6px" width="9" height="9" viewBox="0 0 9 9"><rect x="0.5" y="0.5" width="8" height="8" rx="1" fill="#f7f7f7" stroke="#919191"/><path d="M2 4.5h5M4.500 2v5" stroke="#2b4d9c" stroke-width="1"/></svg>
<svg style="left:101px;top:3px" width="13" height="12" viewBox="0 0 13 12"><rect width="13" height="12" fill="#3b3b3b"/><g fill="#fff"><rect x="1" y="3" width="3" height="2"/><rect x="5" y="3" width="3" height="2"/><rect x="9" y="3" width="3" height="2"/><rect x="1" y="6" width="3" height="2"/><rect x="5" y="6" width="3" height="2"/><rect x="9" y="6" width="3" height="2"/><rect x="1" y="9" width="3" height="2"/><rect x="5" y="9" width="3" height="2"/><rect x="9" y="9" width="3" height="2"/></g></svg>
<span class="t" style="left:119.90px;top:1px;font-size:11.6px;letter-spacing:0.045px;line-height:16px;height:16px;color:#000;">dbo.DMA_Validations_DevOps</span>
</div>
<div class="row" style="top:199px">
<svg style="left:84px;top:6px" width="9" height="9" viewBox="0 0 9 9"><rect x="0.5" y="0.5" width="8" height="8" rx="1" fill="#f7f7f7" stroke="#919191"/><path d="M2 4.5h5M4.500 2v5" stroke="#2b4d9c" stroke-width="1"/></svg>
<svg style="left:101px;top:3px" width="13" height="12" viewBox="0 0 13 12"><rect width="13" height="12" fill="#3b3b3b"/><g fill="#fff"><rect x="1" y="3" width="3" height="2"/><rect x="5" y="3" width="3" height="2"/><rect x="9" y="3" width="3" height="2"/><rect x="1" y="6" width="3" height="2"/><rect x="5" y="6" width="3" height="2"/><rect x="9" y="6" width="3" height="2"/><rect x="1" y="9" width="3" height="2"/><rect x="5" y="9" width="3" height="2"/><rect x="9" y="9" width="3" height="2"/></g></svg>
<span class="t" style="left:119.90px;top:1px;font-size:11.6px;letter-spacing:0.049px;line-height:16px;height:16px;color:#000;">dbo.DmAzureSBQueueManager</span>
</div>
<div class="row" style="top:217px">
<svg style="left:84px;top:6px" width="9" height="9" viewBox="0 0 9 9"><rect x="0.5" y="0.5" width="8" height="8" rx="1" fill="#f7f7f7" stroke="#919191"/><path d="M2 4.5h5M4.500 2v5" stroke="#2b4d9c" stroke-width="1"/></svg>
<svg style="left:101px;top:3px" width="13" height="12" viewBox="0 0 13 12"><rect width="13" height="12" fill="#3b3b3b"/><g fill="#fff"><rect x="1" y="3" width="3" height="2"/><rect x="5" y="3" width="3" height="2"/><rect x="9" y="3" width="3" height="2"/><rect x="1" y="6" width="3" height="2"/><rect x="5" y="6" width="3" height="2"/><rect x="9" y="6" width="3" height="2"/><rect x="1" y="9" width="3" height="2"/><rect x="5" y="9" width="3" height="2"/><rect x="9" y="9" width="3" height="2"/></g></svg>
<span class="t" style="left:119.90px;top:1px;font-size:11.6px;letter-spacing:0.244px;line-height:16px;height:16px;color:#000;">dbo.DMF_AuditLogTable</span>
</div>
<div class="row" style="top:235px">
<svg style="left:84px;top:6px" width="9" height="9" viewBox="0 0 9 9"><rect x="0.5" y="0.5" width="8" height="8" rx="1" fill="#f7f7f7" stroke="#919191"/><path d="M2 4.5h5M4.500 2v5" stroke="#2b4d9c" stroke-width="1"/></svg>
<svg style="left:101px;top:3px" width="13" height="12" viewBox="0 0 13 12"><rect width="13" height="12" fill="#3b3b3b"/><g fill="#fff"><rect x="1" y="3" width="3" height="2"/><rect x="5" y="3" width="3" height="2"/><rect x="9" y="3" width="3" height="2"/><rect x="1" y="6" width="3" height="2"/><rect x="5" y="6" width="3" height="2"/><rect x="9" y="6" width="3" height="2"/><rect x="1" y="9" width="3" height="2"/><rect x="5" y="9" width="3" height="2"/><rect x="9" y="9" width="3" height="2"/></g></svg>
<span class="t" style="left:119.90px;top:1px;font-size:11.6px;letter-spacing:0.199px;line-height:16px;height:16px;color:#000;">dbo.DMF_AuditTableList</span>
</div>
<div class="row" style="top:253px">
<svg style="left:84px;top:6px" width="9" height="9" viewBox="0 0 9 9"><rect x="0.5" y="0.5" width="8" height="8" rx="1" fill="#f7f7f7" stroke="#919191"/><path d="M2 4.5h5M4.500 2v5" stroke="#2b4d9c" stroke-width="1"/></svg>
<svg style="left:101px;top:3px" width="13" height="12" viewBox="0 0 13 12"><rect width="13" height="12" fill="#3b3b3b"/><g fill="#fff"><rect x="1" y="3" width="3" height="2"/><rect x="5" y="3" width="3" height="2"/><rect x="9" y="3" width="3" height="2"/><rect x="1" y="6" width="3" height="2"/><rect x="5" y="6" width="3" height="2"/><rect x="9" y="6" width="3" height="2"/><rect x="1" y="9" width="3" height="2"/><rect x="5" y="9" width="3" height="2"/><rect x="9" y="9" width="3" height="2"/></g></svg>
<span class="t" style="left:119.90px;top:1px;font-size:11.6px;letter-spacing:0.139px;line-height:16px;height:16px;color:#000;">dbo.DMF_LandingMetadata</span>
</div>
<div class="row" style="top:271px">
<svg style="left:84px;top:6px" width="9" height="9" viewBox="0 0 9 9"><rect x="0.5" y="0.5" width="8" height="8" rx="1" fill="#f7f7f7" stroke="#919191"/><path d="M2 4.5h5M4.500 2v5" stroke="#2b4d9c" stroke-width="1"/></svg>
<svg style="left:101px;top:3px" width="13" height="12" viewBox="0 0 13 12"><rect width="13" height="12" fill="#3b3b3b"/><g fill="#fff"><rect x="1" y="3" width="3" height="2"/><rect x="5" y="3" width="3" height="2"/><rect x="9" y="3" width="3" height="2"/><rect x="1" y="6" width="3" height="2"/><rect x="5" y="6" width="3" height="2"/><rect x="9" y="6" width="3" height="2"/><rect x="1" y="9" width="3" height="2"/><rect x="5" y="9" width="3" height="2"/><rect x="9" y="9" width="3" height="2"/></g></svg>
<span class="t" style="left:119.90px;top:1px;font-size:11.6px;letter-spacing:0.068px;line-height:16px;height:16px;color:#000;">dbo.DMF_LKUMappingStatus</span>
</div>
<div class="row" style="top:289px">
<svg style="left:84px;top:6px" width="9" height="9" viewBox="0 0 9 9"><rect x="0.5" y="0.5" width="8" height="8" rx="1" fill="#f7f7f7" stroke="#919191"/><path d="M2 4.5h5M4.500 2v5" stroke="#2b4d9c" stroke-width="1"/></svg>
<svg style="left:101px;top:3px" width="13" height="12" viewBox="0 0 13 12"><rect width="13" height="12" fill="#3b3b3b"/><g fill="#fff"><rect x="1" y="3" width="3" height="2"/><rect x="5" y="3" width="3" height="2"/><rect x="9" y="3" width="3" height="2"/><rect x="1" y="6" width="3" height="2"/><rect x="5" y="6" width="3" height="2"/><rect x="9" y="6" width="3" height="2"/><rect x="1" y="9" width="3" height="2"/><rect x="5" y="9" width="3" height="2"/><rect x="9" y="9" width="3" height="2"/></g></svg>
<span class="t" style="left:119.90px;top:1px;font-size:11.6px;letter-spacing:0.167px;line-height:16px;height:16px;color:#000;">dbo.DMF_LKUMappingType</span>
</div>
<div class="row" style="top:307px">
<svg style="left:84px;top:6px" width="9" height="9" viewBox="0 0 9 9"><rect x="0.5" y="0.5" width="8" height="8" rx="1" fill="#f7f7f7" stroke="#919191"/><path d="M2 4.5h5M4.500 2v5" stroke="#2b4d9c" stroke-width="1"/></svg>
<svg style="left:101px;top:3px" width="13" height="12" viewBox="0 0 13 12"><rect width="13" height="12" fill="#3b3b3b"/><g fill="#fff"><rect x="1" y="3" width="3" height="2"/><rect x="5" y="3" width="3" height="2"/><rect x="9" y="3" width="3" height="2"/><rect x="1" y="6" width="3" height="2"/><rect x="5" y="6" width="3" height="2"/><rect x="9" y="6" width="3" height="2"/><rect x="1" y="9" width="3" height="2"/><rect x="5" y="9" width="3" height="2"/><rect x="9" y="9" width="3" height="2"/></g></svg>
<span class="t" style="left:119.90px;top:1px;font-size:11.6px;letter-spacing:0.068px;line-height:16px;height:16px;color:#000;">dbo.DMF_SchemaMap</span>
</div>
<div class="row" style="top:325px">
<svg style="left:84px;top:6px" width="9" height="9" viewBox="0 0 9 9"><rect x="0.5" y="0.5" width="8" height="8" rx="1" fill="#f7f7f7" stroke="#919191"/><path d="M2 4.5h5M4.500 2v5" stroke="#2b4d9c" stroke-width="1"/></svg>
<svg style="left:101px;top:3px" width="13" height="12" viewBox="0 0 13 12"><rect width="13" height="12" fill="#3b3b3b"/><g fill="#fff"><rect x="1" y="3" width="3" height="2"/><rect x="5" y="3" width="3" height="2"/><rect x="9" y="3" width="3" height="2"/><rect x="1" y="6" width="3" height="2"/><rect x="5" y="6" width="3" height="2"/><rect x="9" y="6" width="3" height="2"/><rect x="1" y="9" width="3" height="2"/><rect x="5" y="9" width="3" height="2"/><rect x="9" y="9" width="3" height="2"/></g></svg>
<span class="t" style="left:119.90px;top:1px;font-size:11.6px;letter-spacing:0.041px;line-height:16px;height:16px;color:#000;">dbo.DMF_SchemaMapperBoard</span>
</div>
<div class="row" style="top:343px">
<svg style="left:84px;top:6px" width="9" height="9" viewBox="0 0 9 9"><rect x="0.5" y="0.5" width="8" height="8" rx="1" fill="#f7f7f7" stroke="#919191"/><path d="M2 4.5h5M4.500 2v5" stroke="#2b4d9c" stroke-width="1"/></svg>
<svg style="left:101px;top:3px" width="13" height="12" viewBox="0 0 13 12"><rect width="13" height="12" fill="#3b3b3b"/><g fill="#fff"><rect x="1" y="3" width="3" height="2"/><rect x="5" y="3" width="3" height="2"/><rect x="9" y="3" width="3" height="2"/><rect x="1" y="6" width="3" height="2"/><rect x="5" y="6" width="3" height="2"/><rect x="9" y="6" width="3" height="2"/><rect x="1" y="9" width="3" height="2"/><rect x="5" y="9" width="3" height="2"/><rect x="9" y="9" width="3" height="2"/></g></svg>
<span class="t" style="left:119.90px;top:1px;font-size:11.6px;letter-spacing:-0.005px;line-height:16px;height:16px;color:#000;">dbo.DMF_Validation_Result_Header</span>
</div>
<div class="row" style="top:361px">
<svg style="left:84px;top:6px" width="9" height="9" viewBox="0 0 9 9"><rect x="0.5" y="0.5" width="8" height="8" rx="1" fill="#f7f7f7" stroke="#919191"/><path d="M2 4.5h5M4.500 2v5" stroke="#2b4d9c" stroke-width="1"/></svg>
<svg style="left:101px;top:3px" width="13" height="12" viewBox="0 0 13 12"><rect width="13" height="12" fill="#3b3b3b"/><g fill="#fff"><rect x="1" y="3" width="3" height="2"/><rect x="5" y="3" width="3" height="2"/><rect x="9" y="3" width="3" height="2"/><rect x="1" y="6" width="3" height="2"/><rect x="5" y="6" width="3" height="2"/><rect x="9" y="6" width="3" height="2"/><rect x="1" y="9" width="3" height="2"/><rect x="5" y="9" width="3" height="2"/><rect x="9" y="9" width="3" height="2"/></g></svg>
<span class="t" style="left:119.90px;top:1px;font-size:11.6px;letter-spacing:-0.012px;line-height:16px;height:16px;color:#000;">dbo.DMF_Validation_Result_Header_Archive</span>
</div>
<div class="row" style="top:379px">
<svg style="left:84px;top:6px" width="9" height="9" viewBox="0 0 9 9"><rect x="0.5" y="0.5" width="8" height="8" rx="1" fill="#f7f7f7" stroke="#919191"/><path d="M2 4.5h5M4.500 2v5" stroke="#2b4d9c" stroke-width="1"/></svg>
<svg style="left:101px;top:3px" width="13" height="12" viewBox="0 0 13 12"><rect width="13" height="12" fill="#3b3b3b"/><g fill="#fff"><rect x="1" y="3" width="3" height="2"/><rect x="5" y="3" width="3" height="2"/><rect x="9" y="3" width="3" height="2"/><rect x="1" y="6" width="3" height="2"/><rect x="5" y="6" width="3" height="2"/><rect x="9" y="6" width="3" height="2"/><rect x="1" y="9" width="3" height="2"/><rect x="5" y="9" width="3" height="2"/><rect x="9" y="9" width="3" height="2"/></g></svg>
<span class="t" style="left:119.90px;top:1px;font-size:11.6px;letter-spacing:-0.049px;line-height:16px;height:16px;color:#000;">dbo.DMF_Validation_Result_Lines</span>
</div>
<div class="row" style="top:397px">
<svg style="left:84px;top:6px" width="9" height="9" viewBox="0 0 9 9"><rect x="0.5" y="0.5" width="8" height="8" rx="1" fill="#f7f7f7" stroke="#919191"/><path d="M2 4.5h5M4.500 2v5" stroke="#2b4d9c" stroke-width="1"/></svg>
<svg style="left:101px;top:3px" width="13" height="12" viewBox="0 0 13 12"><rect width="13" height="12" fill="#3b3b3b"/><g fill="#fff"><rect x="1" y="3" width="3" height="2"/><rect x="5" y="3" width="3" height="2"/><rect x="9" y="3" width="3" height="2"/><rect x="1" y="6" width="3" height="2"/><rect x="5" y="6" width="3" height="2"/><rect x="9" y="6" width="3" height="2"/><rect x="1" y="9" width="3" height="2"/><rect x="5" y="9" width="3" height="2"/><rect x="9" y="9" width="3" height="2"/></g></svg>
<span class="t" style="left:119.90px;top:1px;font-size:11.6px;letter-spacing:-0.031px;line-height:16px;height:16px;color:#000;">dbo.DMF_Validation_Result_Lines_Archive</span>
</div>
<div class="row" style="top:415px">
<svg style="left:84px;top:6px" width="9" height="9" viewBox="0 0 9 9"><rect x="0.5" y="0.5" width="8" height="8" rx="1" fill="#f7f7f7" stroke="#919191"/><path d="M2 4.5h5M4.500 2v5" stroke="#2b4d9c" stroke-width="1"/></svg>
<svg style="left:101px;top:3px" width="13" height="12" viewBox="0 0 13 12"><rect width="13" height="12" fill="#3b3b3b"/><g fill="#fff"><rect x="1" y="3" width="3" height="2"/><rect x="5" y="3" width="3" height="2"/><rect x="9" y="3" width="3" height="2"/><rect x="1" y="6" width="3" height="2"/><rect x="5" y="6" width="3" height="2"/><rect x="9" y="6" width="3" height="2"/><rect x="1" y="9" width="3" height="2"/><rect x="5" y="9" width="3" height="2"/><rect x="9" y="9" width="3" height="2"/></g></svg>
<span class="t" style="left:119.90px;top:1px;font-size:11.6px;letter-spacing:-0.048px;line-height:16px;height:16px;color:#000;">dbo.ETL_ErrorReporting</span>
</div>
<div class="row" style="top:433px">
<svg style="left:84px;top:6px" width="9" height="9" viewBox="0 0 9 9"><rect x="0.5" y="0.5" width="8" height="8" rx="1" fill="#f7f7f7" stroke="#919191"/><path d="M2 4.5h5M4.500 2v5" stroke="#2b4d9c" stroke-width="1"/></svg>
<svg style="left:101px;top:3px" width="13" height="12" viewBox="0 0 13 12"><rect width="13" height="12" fill="#3b3b3b"/><g fill="#fff"><rect x="1" y="3" width="3" height="2"/><rect x="5" y="3" width="3" height="2"/><rect x="9" y="3" width="3" height="2"/><rect x="1" y="6" width="3" height="2"/><rect x="5" y="6" width="3" height="2"/><rect x="9" y="6" width="3" height="2"/><rect x="1" y="9" width="3" height="2"/><rect x="5" y="9" width="3" height="2"/><rect x="9" y="9" width="3" height="2"/></g></svg>
<span class="t" style="left:119.90px;top:1px;font-size:11.6px;letter-spacing:-0.030px;line-height:16px;height:16px;color:#000;">dbo.ETLProcessControl</span>
</div>
</div>
<div class="abs" style="left:412px;top:48px;width:17px;height:460px;background:#e8e8ec"></div>
<svg style="left:416px;top:55px" width="9" height="5" viewBox="0 0 9 5"><path d="M0 5L4.500 0L9 5z" fill="#868999"/></svg>
<div class="abs" style="left:416px;top:243px;width:9px;height:64px;background:#c8cad4"></div>
<div class="abs" style="left:78px;top:65px;width:220px;height:23px;border:3px solid #0000f5;border-radius:2px"></div>
</div>
<div class="abs" style="left:444px;top:79px;width:263px;height:21px;background:#fff29d"></div>
<span class="t" style="left:448.20px;top:82px;font-size:12px;letter-spacing:-0.258px;line-height:16px;height:16px;color:#000;">SQLQuery2.sql - HS...YN\aparasher (59))*</span>
<svg style="left:674px;top:86px" width="10" height="7" viewBox="0 0 10 7"><path d="M0 3.500h4M4.500 0.500v6M4.500 1.500h4v4h-4" fill="none" stroke="#75633d" stroke-width="1"/><path d="M4.500 5h4" stroke="#75633d" stroke-width="1.500"/></svg>
<svg style="left:692px;top:85px" width="10" height="9" viewBox="0 0 10 9"><g transform="translate(0.5,0.2)"><path d="M0.500 0.300L8.500 7.700M8.500 0.300L0.500 7.700" stroke="#75633d" stroke-width="1.300"/></g></svg>
<div class="abs" style="left:444px;top:98px;width:611px;height:2px;background:#fff29d"></div>
<div class="abs" style="left:444px;top:100px;width:611px;height:140px;background:#fff"></div>
<div class="abs" style="left:446px;top:100px;width:16px;height:140px;background:#e6e7e8"></div>
<div class="abs" style="left:466px;top:180px;width:4px;height:48px;background:#ffee62"></div>
<svg style="left:472px;top:120px" width="9" height="80" viewBox="0 0 9 80"><rect x="0.500" y="0.500" width="8" height="8" fill="#fff" stroke="#a5a5a5"/><path d="M2 4.500h5" stroke="#555"/><path d="M5.500 9v67h3.500" fill="none" stroke="#a5a5a5"/></svg>
<div class="abs" style="left:483px;top:212px;width:469px;height:16px;background:#99c9ef"></div>
<svg style="left:609.5px;top:129px" width="56.0" height="3"><path d="M0 2.5L2 0.5L4 2.5L6 0.5L8 2.5L10 0.5L12 2.5L14 0.5L16 2.5L18 0.5L20 2.5L22 0.5L24 2.5L26 0.5L28 2.5L30 0.5L32 2.5L34 0.5L36 2.5L38 0.5L40 2.5L42 0.5L44 2.5L46 0.5L48 2.5L50 0.5L52 2.5L54 0.5L56 2.5" fill="none" stroke="#ff3c3c" stroke-width="0.85" stroke-linejoin="round"/></svg>
<svg style="left:532.5px;top:145px" width="42.0" height="3"><path d="M0 2.5L2 0.5L4 2.5L6 0.5L8 2.5L10 0.5L12 2.5L14 0.5L16 2.5L18 0.5L20 2.5L22 0.5L24 2.5L26 0.5L28 2.5L30 0.5L32 2.5L34 0.5L36 2.5L38 0.5L40 2.5L42 0.5" fill="none" stroke="#ff3c3c" stroke-width="0.85" stroke-linejoin="round"/></svg>
<svg style="left:532.5px;top:161px" width="42.0" height="3"><path d="M0 2.5L2 0.5L4 2.5L6 0.5L8 2.5L10 0.5L12 2.5L14 0.5L16 2.5L18 0.5L20 2.5L22 0.5L24 2.5L26 0.5L28 2.5L30 0.5L32 2.5L34 0.5L36 2.5L38 0.5L40 2.5L42 0.5" fill="none" stroke="#ff3c3c" stroke-width="0.85" stroke-linejoin="round"/></svg>
<svg style="left:532.5px;top:177px" width="112.0" height="3"><path d="M0 2.5L2 0.5L4 2.5L6 0.5L8 2.5L10 0.5L12 2.5L14 0.5L16 2.5L18 0.5L20 2.5L22 0.5L24 2.5L26 0.5L28 2.5L30 0.5L32 2.5L34 0.5L36 2.5L38 0.5L40 2.5L42 0.5L44 2.5L46 0.5L48 2.5L50 0.5L52 2.5L54 0.5L56 2.5L58 0.5L60 2.5L62 0.5L64 2.5L66 0.5L68 2.5L70 0.5L72 2.5L74 0.5L76 2.5L78 0.5L80 2.5L82 0.5L84 2.5L86 0.5L88 2.5L90 0.5L92 2.5L94 0.5L96 2.5L98 0.5L100 2.5L102 0.5L104 2.5L106 0.5L108 2.5L110 0.5L112 2.5" fill="none" stroke="#ff3c3c" stroke-width="0.85" stroke-linejoin="round"/></svg>
<svg style="left:532.5px;top:193px" width="308.0" height="3"><path d="M0 2.5L2 0.5L4 2.5L6 0.5L8 2.5L10 0.5L12 2.5L14 0.5L16 2.5L18 0.5L20 2.5L22 0.5L24 2.5L26 0.5L28 2.5L30 0.5L32 2.5L34 0.5L36 2.5L38 0.5L40 2.5L42 0.5L44 2.5L46 0.5L48 2.5L50 0.5L52 2.5L54 0.5L56 2.5L58 0.5L60 2.5L62 0.5L64 2.5L66 0.5L68 2.5L70 0.5L72 2.5L74 0.5L76 2.5L78 0.5L80 2.5L82 0.5L84 2.5L86 0.5L88 2.5L90 0.5L92 2.5L94 0.5L96 2.5L98 0.5L100 2.5L102 0.5L104 2.5L106 0.5L108 2.5L110 0.5L112 2.5L114 0.5L116 2.5L118 0.5L120 2.5L122 0.5L124 2.5L126 0.5L128 2.5L130 0.5L132 2.5L134 0.5L136 2.5L138 0.5L140 2.5L142 0.5L144 2.5L146 0.5L148 2.5L150 0.5L152 2.5L154 0.5L156 2.5L158 0.5L160 2.5L162 0.5L164 2.5L166 0.5L168 2.5L170 0.5L172 2.5L174 0.5L176 2.5L178 0.5L180 2.5L182 0.5L184 2.5L186 0.5L188 2.5L190 0.5L192 2.5L194 0.5L196 2.5L198 0.5L200 2.5L202 0.5L204 2.5L206 0.5L208 2.5L210 0.5L212 2.5L214 0.5L216 2.5L218 0.5L220 2.5L222 0.5L224 2.5L226 0.5L228 2.5L230 0.5L232 2.5L234 0.5L236 2.5L238 0.5L240 2.5L242 0.5L244 2.5L246 0.5L248 2.5L250 0.5L252 2.5L254 0.5L256 2.5L258 0.5L260 2.5L262 0.5L264 2.5L266 0.5L268 2.5L270 0.5L272 2.5L274 0.5L276 2.5L278 0.5L280 2.5L282 0.5L284 2.5L286 0.5L288 2.5L290 0.5L292 2.5L294 0.5L296 2.5L298 0.5L300 2.5L302 0.5L304 2.5L306 0.5L308 2.5" fill="none" stroke="#ff3c3c" stroke-width="0.85" stroke-linejoin="round"/></svg>
<svg style="left:637.5px;top:225px" width="308.0" height="3"><path d="M0 2.5L2 0.5L4 2.5L6 0.5L8 2.5L10 0.5L12 2.5L14 0.5L16 2.5L18 0.5L20 2.5L22 0.5L24 2.5L26 0.5L28 2.5L30 0.5L32 2.5L34 0.5L36 2.5L38 0.5L40 2.5L42 0.5L44 2.5L46 0.5L48 2.5L50 0.5L52 2.5L54 0.5L56 2.5L58 0.5L60 2.5L62 0.5L64 2.5L66 0.5L68 2.5L70 0.5L72 2.5L74 0.5L76 2.5L78 0.5L80 2.5L82 0.5L84 2.5L86 0.5L88 2.5L90 0.5L92 2.5L94 0.5L96 2.5L98 0.5L100 2.5L102 0.5L104 2.5L106 0.5L108 2.5L110 0.5L112 2.5L114 0.5L116 2.5L118 0.5L120 2.5L122 0.5L124 2.5L126 0.5L128 2.5L130 0.5L132 2.5L134 0.5L136 2.5L138 0.5L140 2.5L142 0.5L144 2.5L146 0.5L148 2.5L150 0.5L152 2.5L154 0.5L156 2.5L158 0.5L160 2.5L162 0.5L164 2.5L166 0.5L168 2.5L170 0.5L172 2.5L174 0.5L176 2.5L178 0.5L180 2.5L182 0.5L184 2.5L186 0.5L188 2.5L190 0.5L192 2.5L194 0.5L196 2.5L198 0.5L200 2.5L202 0.5L204 2.5L206 0.5L208 2.5L210 0.5L212 2.5L214 0.5L216 2.5L218 0.5L220 2.5L222 0.5L224 2.5L226 0.5L228 2.5L230 0.5L232 2.5L234 0.5L236 2.5L238 0.5L240 2.5L242 0.5L244 2.5L246 0.5L248 2.5L250 0.5L252 2.5L254 0.5L256 2.5L258 0.5L260 2.5L262 0.5L264 2.5L266 0.5L268 2.5L270 0.5L272 2.5L274 0.5L276 2.5L278 0.5L280 2.5L282 0.5L284 2.5L286 0.5L288 2.5L290 0.5L292 2.5L294 0.5L296 2.5L298 0.5L300 2.5L302 0.5L304 2.5L306 0.5L308 2.5" fill="none" stroke="#ff3c3c" stroke-width="0.85" stroke-linejoin="round"/></svg>
<div class="cl" style="top:101px"><span class="c">/****** Script for SelectTopNRows command from SSMS  ******/</span></div>
<div class="cl" style="top:117px"><span class="k">SELECT</span> <span class="k">TOP</span> <span class="g">(</span>1000<span class="g">)</span> [Entity]</div>
<div class="cl" style="top:133px">      <span class="g">,</span>[Name]</div>
<div class="cl" style="top:149px">      <span class="g">,</span>[Guid]</div>
<div class="cl" style="top:165px">      <span class="g">,</span>[ReferenceField]</div>
<div class="cl" style="top:181px">  <span class="k">FROM</span> [HISOL_DM_STG]<span class="g">.</span>[dbo]<span class="g">.</span>[CE_RecordGuids_Sample]</div>
<div class="cl" style="top:213px"><span class="k">SELECT</span> <span class="m">COUNT</span> <span class="g">(*)</span> <span class="k">FROM</span> [HISOL_DM_STG]<span class="g">.</span>[dbo]<span class="g">.</span>[CE_RecordGuids_Sample]<span class="g">;</span></div>
<div class="abs" style="left:476px;top:204px;width:489px;height:29px;border:3px solid #0000f5;border-radius:2px"></div>
<div class="abs" style="left:444px;top:240px;width:611px;height:17px;background:#e8e8ec"></div>
<div class="abs" style="left:444px;top:240px;width:61px;height:17px;background:#fff;border:1px solid #b5c0d8"></div>
<span class="t" style="left:447.40px;top:242px;font-size:11px;letter-spacing:-0.001px;line-height:15px;height:15px;color:#000;">100 %</span>
<svg style="left:495px;top:248px" width="8" height="4" viewBox="0 0 8 4"><g transform="translate(0.5,0)"><path d="M0.300 0h6.400L3.500 3.300z" fill="#222"/></g></svg>
<svg style="left:511px;top:244px" width="5" height="9"><path d="M5 0v9L0 4.500z" fill="#c1c3cd"/></svg>
<div class="abs" style="left:444px;top:257px;width:611px;height:27px;background:#f0f0f0"></div>
<div class="abs" style="left:444px;top:284px;width:611px;height:290px;background:#fff"></div>
<div class="abs" style="left:445px;top:261px;width:73px;height:23px;background:#fafafa;border:1px solid #dcdcdc;border-bottom:none"></div>
<div class="abs" style="left:517px;top:263px;width:79px;height:20px;background:#f0f0f0;border:1px solid #dcdcdc;border-bottom:none"></div>
<svg style="left:455px;top:265px" width="13" height="12" viewBox="0 0 13 12"><rect width="13" height="12" fill="#3b3b3b"/><g fill="#fff"><rect x="1" y="3" width="3" height="2"/><rect x="5" y="3" width="3" height="2"/><rect x="9" y="3" width="3" height="2"/><rect x="1" y="6" width="3" height="2"/><rect x="5" y="6" width="3" height="2"/><rect x="9" y="6" width="3" height="2"/><rect x="1" y="9" width="3" height="2"/><rect x="5" y="9" width="3" height="2"/><rect x="9" y="9" width="3" height="2"/></g></svg>
<svg style="left:524px;top:266px" width="14" height="14" viewBox="0 0 14 14"><path d="M8 0h6v11H8z" fill="#3b3b3b"/><path d="M9 1.500h4M9 3.500h4" stroke="#ddd" stroke-width="0.800"/><rect x="11.500" y="8" width="1.500" height="1.500" fill="#fff"/><path d="M0.500 4.500h5l2 2v7h-7z" fill="#fff" stroke="#3b3b3b"/><path d="M2 8.500h4M2 10.500h4M2 6.500h2.500" stroke="#3b3b3b" stroke-width="1"/></svg>
<span class="t" style="left:475.00px;top:263px;font-size:11px;letter-spacing:-0.348px;line-height:16px;height:16px;color:#000;">Results</span>
<span class="t" style="left:543.40px;top:266px;font-size:11px;letter-spacing:-0.277px;line-height:16px;height:16px;color:#000;">Messages</span>
<div class="abs" style="left:449px;top:284px;width:606px;height:1px;background:#a0a0a0"></div>
<div class="abs" style="left:449px;top:284px;width:1px;height:290px;background:#a0a0a0"></div>
<div class="abs" style="left:450px;top:284px;width:136px;height:19px;border-right:1px solid #d0d0d0;border-bottom:1px solid #d0d0d0"></div>
<div class="abs" style="left:450px;top:284px;width:32px;height:39px;border-right:1px solid #d0d0d0;border-bottom:1px solid #d0d0d0"></div>
<span class="t" style="left:486.40px;top:286px;font-size:11px;letter-spacing:-0.219px;line-height:16px;height:16px;color:#000;">(No column name)</span>
<span class="t" style="left:456.40px;top:305px;font-size:11px;letter-spacing:0.000px;line-height:16px;height:16px;color:#000;">1</span>
<div class="abs" style="left:482px;top:303px;width:104px;height:20px;background:#e8e9f0;border:1px dotted #000"></div>
<span class="t" style="left:489.40px;top:305px;font-size:11px;letter-spacing:-0.080px;line-height:16px;height:16px;color:#000;">138</span>
<div class="abs" style="left:471px;top:298px;width:128px;height:32px;border:3px solid #0000f5;border-radius:2px"></div>
</body></html>
